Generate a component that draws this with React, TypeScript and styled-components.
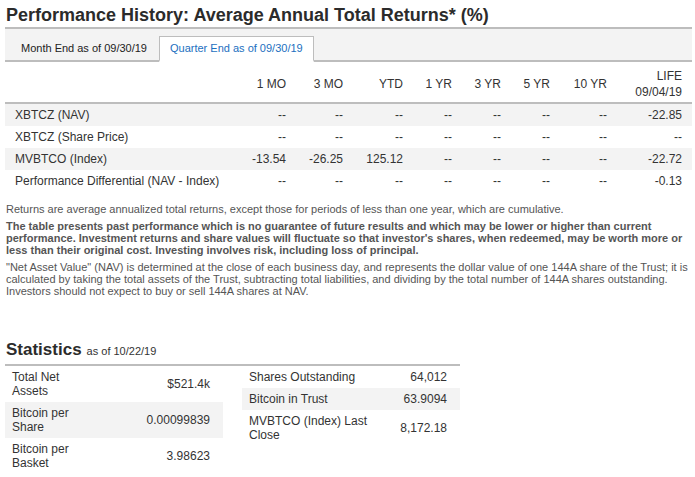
import React from "react";
import styled, { createGlobalStyle } from "styled-components";

const GlobalStyle = createGlobalStyle`
  body {
    margin: 0;
    background: #fff;
    font-family: "Liberation Sans", Arial, sans-serif;
    color: #333;
  }
`;

const Page = styled.div`
  width: 687px;
  padding: 5px 3px 0 5px;
`;

const Title = styled.h1`
  margin: 0;
  font-size: 18px;
  line-height: 21px;
  font-weight: bold;
  color: #2b2b2b;
  padding-left: 1px;
  padding-bottom: 1px;
  border-bottom: 2px solid #bdbdbd;
`;

const TabBar = styled.div`
  display: flex;
  align-items: flex-end;
  height: 31px;
  padding-left: 4px;
  background: #f3f3f3;
  border-bottom: 2px solid #bdbdbd;
`;

const Tab = styled.div<{ active?: boolean }>`
  height: 23px;
  line-height: 23px;
  padding: 0 ${p => (p.active ? 10 : 11)}px;
  margin-bottom: -2px;
  font-size: 11px;
  color: ${p => (p.active ? "#1c6fc0" : "#222")};
  background: ${p => (p.active ? "#fff" : "transparent")};
  border: 1px solid ${p => (p.active ? "#bdbdbd" : "transparent")};
  border-bottom: 2px solid ${p => (p.active ? "#fff" : "#bdbdbd")};
`;

const Row = styled.div<{ head?: boolean; shade?: boolean }>`
  display: grid;
  grid-template-columns: 1fr 60px 57px 60px 49px 49px 49px 57px 75px;
  align-items: center;
  height: ${p => (p.head ? 42 : 22)}px;
  padding-top: ${p => (p.head ? 3 : 0)}px;
  box-sizing: border-box;
  font-size: 12px;
  line-height: 16px;
  background: ${p => (p.shade ? "#f3f3f3" : "#fff")};
  border-bottom: ${p => (p.head ? "2px solid #bdbdbd" : "none")};
`;

const Label = styled.div`
  padding-left: 10px;
  white-space: nowrap;
`;

const Num = styled.div`
  text-align: right;
  padding-right: 10px;
  white-space: nowrap;
`;

const Notes = styled.div`
  margin-top: 11px;
  padding-left: 1px;
  font-size: 11px;
  line-height: 12px;
  color: #555;
`;

const Note = styled.p<{ strong?: boolean }>`
  margin: 0 0 5px;
  font-weight: ${p => (p.strong ? "bold" : "normal")};

  & + & {
    margin-top: 1px;
  }
`;

const Stats = styled.section`
  width: 455px;
  margin-top: 43px;
`;

const StatsHead = styled.div`
  display: flex;
  align-items: baseline;
  gap: 5px;
  padding-left: 1px;
  padding-bottom: 4px;
  border-bottom: 2px solid #bdbdbd;
`;

const StatsTitle = styled.h2`
  margin: 0;
  font-size: 17px;
  line-height: 20px;
  font-weight: bold;
  color: #2b2b2b;
`;

const AsOf = styled.span`
  font-size: 11px;
`;

const StatsGrid = styled.div`
  display: grid;
  grid-template-columns: 218px 218px;
  column-gap: 19px;
  align-items: start;
`;

const StatTable = styled.div``;

const StatRow = styled.div<{ shade?: boolean; labelWidth: number }>`
  display: grid;
  grid-template-columns: ${p => p.labelWidth}px 1fr;
  align-items: center;
  padding: 4px 13px 4px 7px;
  font-size: 12px;
  line-height: 14px;
  background: ${p => (p.shade ? "#f3f3f3" : "#fff")};
`;

const StatValue = styled.div`
  text-align: right;
`;

const cols = ["1 MO", "3 MO", "YTD", "1 YR", "3 YR", "5 YR", "10 YR"];

const rows = [
  { name: "XBTCZ (NAV)", vals: ["--", "--", "--", "--", "--", "--", "--", "-22.85"] },
  { name: "XBTCZ (Share Price)", vals: ["--", "--", "--", "--", "--", "--", "--", "--"] },
  { name: "MVBTCO (Index)", vals: ["-13.54", "-26.25", "125.12", "--", "--", "--", "--", "-22.72"] },
  { name: "Performance Differential (NAV - Index)", vals: ["--", "--", "--", "--", "--", "--", "--", "-0.13"] },
];

const leftStats = [
  ["Total Net Assets", "$521.4k"],
  ["Bitcoin per Share", "0.00099839"],
  ["Bitcoin per Basket", "3.98623"],
];

const rightStats = [
  ["Shares Outstanding", "64,012"],
  ["Bitcoin in Trust", "63.9094"],
  ["MVBTCO (Index) Last Close", "8,172.18"],
];

export default function App() {
  return (
    <Page>
      <GlobalStyle />
      <Title>Performance History: Average Annual Total Returns* (%)</Title>
      <TabBar>
        <Tab>Month End as of 09/30/19</Tab>
        <Tab active>Quarter End as of 09/30/19</Tab>
      </TabBar>

      <Row head>
        <Label />
        {cols.map(c => (
          <Num key={c}>{c}</Num>
        ))}
        <Num>
          LIFE
          <br />
          09/04/19
        </Num>
      </Row>
      {rows.map((r, i) => (
        <Row key={r.name} shade={i % 2 === 0}>
          <Label>{r.name}</Label>
          {r.vals.map((v, j) => (
            <Num key={j}>{v}</Num>
          ))}
        </Row>
      ))}

      <Notes>
        <Note>
          Returns are average annualized total returns, except those for periods of less than one year, which are
          cumulative.
        </Note>
        <Note strong>
          The table presents past performance which is no guarantee of future results and which may be lower or
          higher than current performance. Investment returns and share values will fluctuate so that investor's
          shares, when redeemed, may be worth more or less than their original cost. Investing involves risk,
          including loss of principal.
        </Note>
        <Note>
          "Net Asset Value" (NAV) is determined at the close of each business day, and represents the dollar value
          of one 144A share of the Trust; it is calculated by taking the total assets of the Trust, subtracting total
          liabilities, and dividing by the total number of 144A shares outstanding. Investors should not expect to
          buy or sell 144A shares at NAV.
        </Note>
      </Notes>

      <Stats>
        <StatsHead>
          <StatsTitle>Statistics</StatsTitle>
          <AsOf>as of 10/22/19</AsOf>
        </StatsHead>
        <StatsGrid>
          <StatTable>
            {leftStats.map(([k, v], i) => (
              <StatRow key={k} shade={i === 1} labelWidth={80}>
                <div>{k}</div>
                <StatValue>{v}</StatValue>
              </StatRow>
            ))}
          </StatTable>
          <StatTable>
            {rightStats.map(([k, v], i) => (
              <StatRow key={k} shade={i === 1} labelWidth={130}>
                <div>{k}</div>
                <StatValue>{v}</StatValue>
              </StatRow>
            ))}
          </StatTable>
        </StatsGrid>
      </Stats>
    </Page>
  );
}
